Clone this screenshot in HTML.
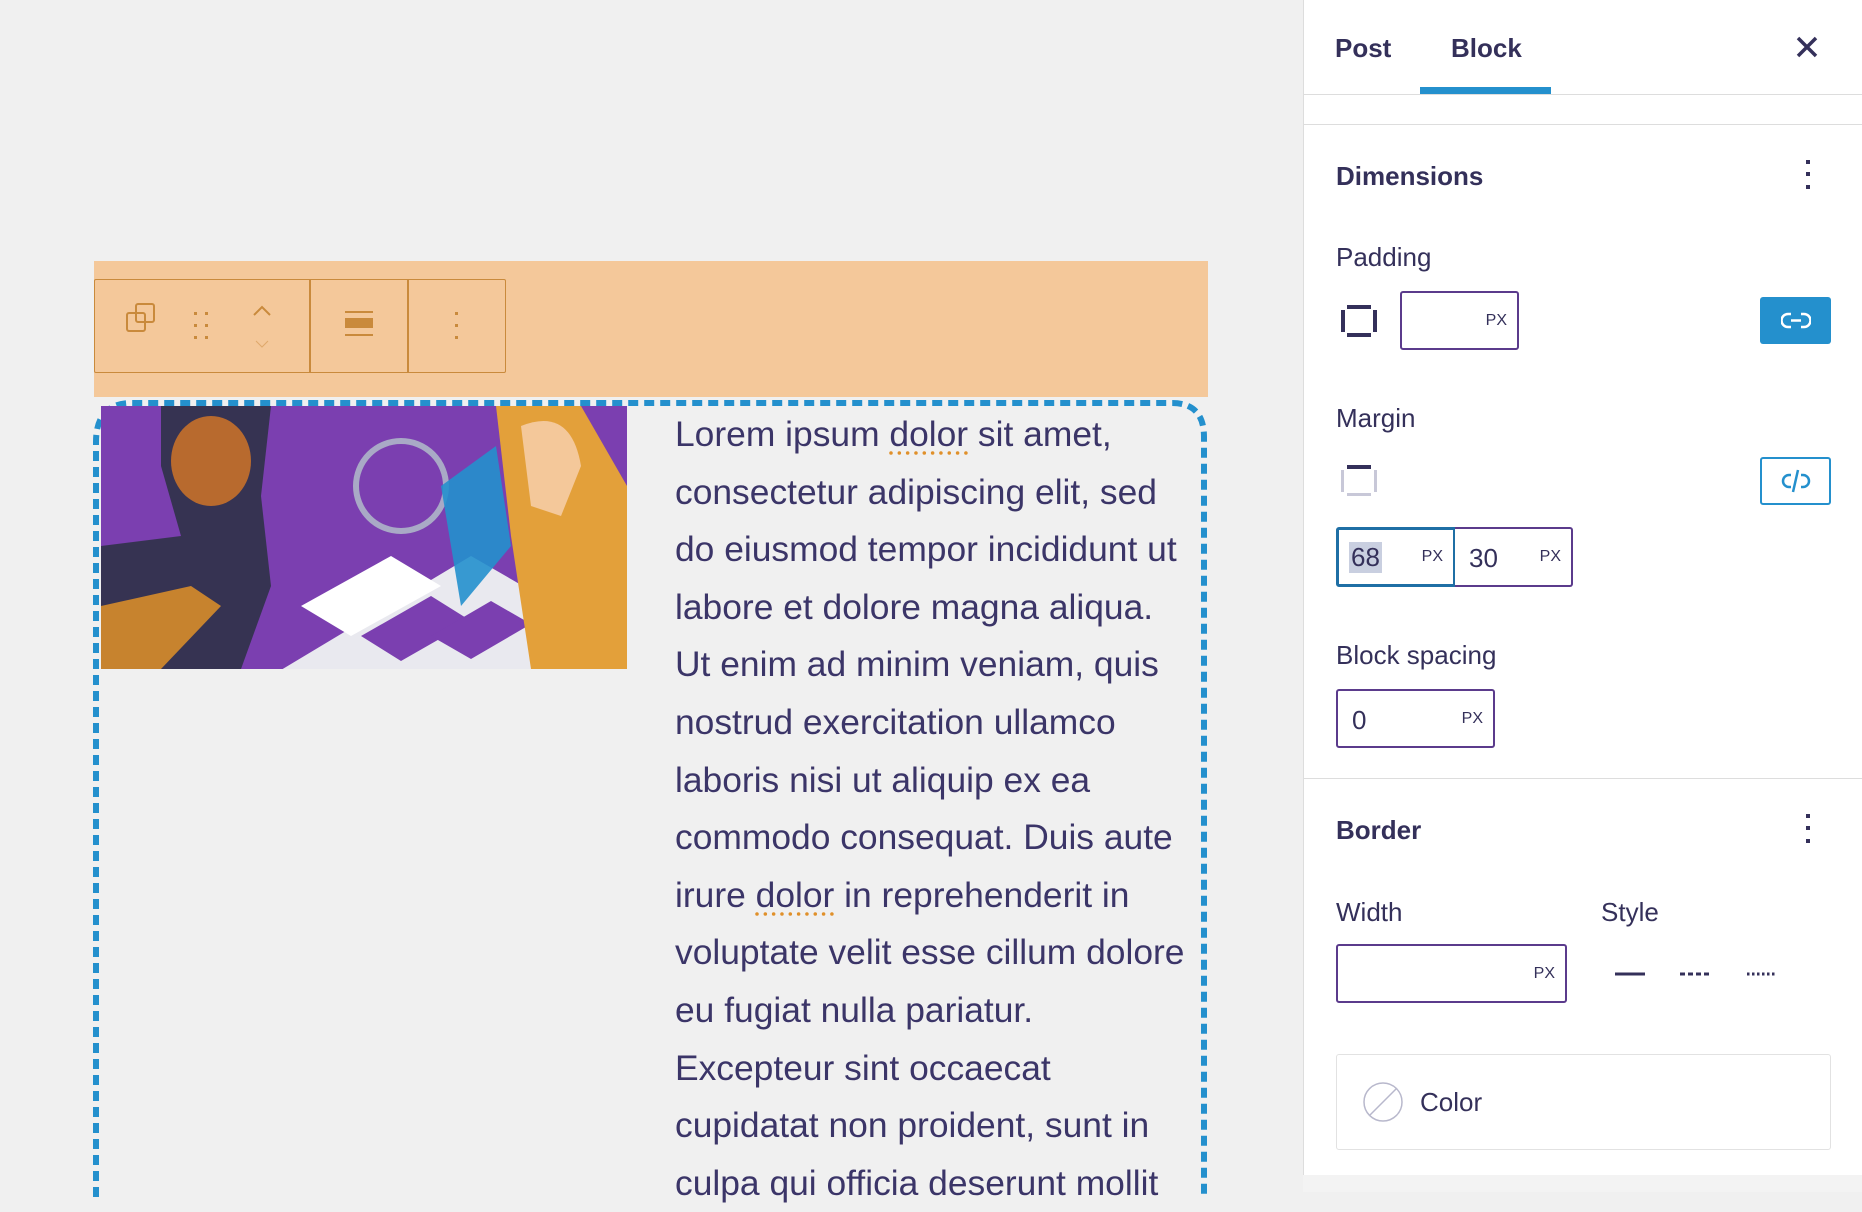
<!DOCTYPE html>
<html><head><meta charset="utf-8"><style>
*{box-sizing:border-box;margin:0;padding:0}
body{width:1862px;height:1192px;overflow:hidden;background:#f0f0f0;font-family:"Liberation Sans",sans-serif;color:#34305a;position:relative}
.a{position:absolute}
.side{left:1303px;top:0;width:559px;height:1192px;background:#fff;border-left:1px solid #ddd}
.lbl{font-size:26px;color:#34305a}
.inp{border:2px solid #5b3b8c;border-radius:3px;background:#fff}
.px{position:absolute;right:10px;top:50%;transform:translateY(-50%);font-size:16px;color:#34305a}
.txt{left:675px;top:406px;font-size:35.4px;line-height:57.6px;color:#3b3568;white-space:nowrap}
.u{text-decoration:underline dotted #e0902a;text-underline-offset:6px}
</style></head><body>
<!-- orange band -->
<div class="a" style="left:94px;top:261px;width:1114px;height:136px;background:#f4c89a"></div>
<div class="a" style="left:94px;top:279px;width:412px;height:94px;border:1.5px solid #c98a3c;border-radius:2px"></div>
<div class="a" style="left:309px;top:279px;width:1.5px;height:94px;background:#c98a3c"></div>
<div class="a" style="left:407px;top:279px;width:1.5px;height:94px;background:#c98a3c"></div>
<svg class="a" style="left:94px;top:279px" width="412" height="94" fill="none" stroke="#c98a3c" stroke-width="2">
<rect x="33" y="34" width="18" height="18" rx="2"/><rect x="42" y="25" width="18" height="18" rx="2"/>
<g fill="#c98a3c" stroke="none"><rect x="100" y="33" width="3" height="3"/><rect x="111" y="33" width="3" height="3"/><rect x="100" y="45" width="3" height="3"/><rect x="111" y="45" width="3" height="3"/><rect x="100" y="57" width="3" height="3"/><rect x="111" y="57" width="3" height="3"/>
<rect x="251" y="39" width="28" height="10"/><rect x="361" y="33" width="3" height="3"/><rect x="361" y="45" width="3" height="3"/><rect x="361" y="57" width="3" height="3"/></g>
<path d="M160 36 L168 28 L176 36"/><path d="M162 62 L168 68 L174 62" stroke-width="1" opacity=".5"/>
<line x1="251" y1="33" x2="279" y2="33"/><line x1="251" y1="56" x2="279" y2="56"/>
</svg>
<!-- dashed border -->
<svg class="a" style="left:92px;top:397px" width="1122" height="800" fill="none">
<path d="M4 800 V45 Q4 6 40 6 H1080 Q1112 6 1112 40 V800" stroke="#2490cd" stroke-width="6" stroke-dasharray="10 6"/>
</svg>
<!-- image -->
<svg class="a" style="left:101px;top:406px" width="526" height="263">
<rect width="526" height="263" fill="#7b3fb0"/>
<path d="M60 0 L170 0 L160 90 L170 180 L140 263 L0 263 L0 140 L80 130 L60 60 Z" fill="#363352"/>
<ellipse cx="110" cy="55" rx="40" ry="45" fill="#b86a2e"/>
<path d="M0 200 L90 180 L120 200 L60 263 L0 263Z" fill="#c7832e"/>
<path d="M120 300 L370 150 L526 240 L526 263 L60 263Z" fill="#e9e9ef"/>
<path d="M200 200 L290 150 L340 180 L250 230Z" fill="#fff"/>
<path d="M260 230 L330 190 L370 215 L300 255Z" fill="#7b3fb0"/>
<path d="M330 230 L390 195 L430 218 L370 253Z" fill="#7b3fb0"/>
<circle cx="300" cy="80" r="45" fill="none" stroke="#a9a9c6" stroke-width="6"/>
<path d="M395 0 L480 0 L526 80 L526 263 L430 263 L410 130 Z" fill="#e3a03a"/>
<path d="M420 20 Q470 0 480 60 L460 110 L430 100 Z" fill="#f4c89a"/>
<path d="M340 80 L395 40 L410 140 L360 200Z" fill="#2490cd" opacity=".9"/>
</svg>
<div class="a txt">Lorem ipsum <span class="u">dolor</span> sit amet,<br>consectetur adipiscing elit, sed<br>do eiusmod tempor incididunt ut<br>labore et dolore magna aliqua.<br>Ut enim ad minim veniam, quis<br>nostrud exercitation ullamco<br>laboris nisi ut aliquip ex ea<br>commodo consequat. Duis aute<br>irure <span class="u">dolor</span> in reprehenderit in<br>voluptate velit esse cillum dolore<br>eu fugiat nulla pariatur.<br>Excepteur sint occaecat<br>cupidatat non proident, sunt in<br>culpa qui officia deserunt mollit</div>
<!-- sidebar -->
<div class="a side"></div>
<div class="a" style="left:1303px;top:94px;width:559px;height:1px;background:#ddd"></div>
<div class="a" style="left:1303px;top:124px;width:559px;height:1px;background:#ddd"></div>
<div class="a" style="left:1303px;top:778px;width:559px;height:1px;background:#ddd"></div>
<div class="a" style="left:1303px;top:1175px;width:559px;height:17px;background:#f3f3f3"></div>
<div class="a" style="left:1335px;top:33px;font-size:26px;font-weight:bold">Post</div>
<div class="a" style="left:1451px;top:33px;font-size:26px;font-weight:bold">Block</div>
<div class="a" style="left:1420px;top:87px;width:131px;height:7px;background:#2490cd"></div>
<svg class="a" style="left:1795px;top:35px" width="24" height="24" stroke="#34305a" stroke-width="3.5"><path d="M3 3L21 21M21 3L3 21"/></svg>
<div class="a" style="left:1336px;top:161px;font-size:26px;font-weight:bold">Dimensions</div>
<svg class="a" style="left:1804px;top:158px" width="8" height="34" fill="#34305a"><rect x="2" y="2" width="4" height="4"/><rect x="2" y="14" width="4" height="4"/><rect x="2" y="27" width="4" height="4"/></svg>
<div class="a lbl" style="left:1336px;top:242px">Padding</div>
<svg class="a" style="left:1341px;top:302px" width="36" height="38" fill="#34305a"><rect x="6" y="3" width="24" height="4"/><rect x="6" y="31" width="24" height="4"/><rect x="0" y="8" width="4" height="22"/><rect x="32" y="8" width="4" height="22"/></svg>
<div class="a inp" style="left:1400px;top:291px;width:119px;height:59px"><span class="px">PX</span></div>
<div class="a" style="left:1760px;top:297px;width:71px;height:47px;background:#2490cd;border-radius:3px"></div>
<svg class="a" style="left:1781px;top:309px" width="30" height="24" fill="none" stroke="#fff" stroke-width="2.5"><path d="M10 5H7a6 6 0 000 13h3M20 5h3a6 6 0 010 13h-3M10 11.5h10"/></svg>
<div class="a lbl" style="left:1336px;top:403px">Margin</div>
<svg class="a" style="left:1341px;top:462px" width="36" height="38"><rect x="6" y="3" width="24" height="4" fill="#34305a"/><rect x="6" y="31" width="24" height="3" fill="#c8c8d8"/><rect x="0" y="8" width="3" height="22" fill="#c8c8d8"/><rect x="33" y="8" width="3" height="22" fill="#c8c8d8"/></svg>
<div class="a" style="left:1760px;top:457px;width:71px;height:48px;border:2px solid #2490cd;border-radius:3px;background:#fff"></div>
<svg class="a" style="left:1781px;top:468px" width="30" height="26" fill="none" stroke="#2490cd" stroke-width="2.5"><path d="M10 7H8a6 6 0 000 12h2M20 7h2a6 6 0 010 12h-2M17 2L12 24"/></svg>
<div class="a" style="left:1336px;top:527px;width:120px;height:60px;border:3px solid #1f6fa5;border-radius:3px 0 0 3px;background:#fff"><span class="a" style="left:10px;top:12px;font-size:26px;background:#c9cfe0;padding:0 2px">68</span><span class="px">PX</span></div>
<div class="a inp" style="left:1455px;top:527px;width:118px;height:60px;border-left:none;border-radius:0 3px 3px 0"><span class="a" style="left:14px;top:14px;font-size:26px">30</span><span class="px">PX</span></div>
<div class="a lbl" style="left:1336px;top:640px">Block spacing</div>
<div class="a inp" style="left:1336px;top:689px;width:159px;height:59px"><span class="a" style="left:14px;top:14px;font-size:26px">0</span><span class="px">PX</span></div>
<div class="a" style="left:1336px;top:815px;font-size:26px;font-weight:bold">Border</div>
<svg class="a" style="left:1804px;top:812px" width="8" height="34" fill="#34305a"><rect x="2" y="2" width="4" height="4"/><rect x="2" y="14" width="4" height="4"/><rect x="2" y="27" width="4" height="4"/></svg>
<div class="a lbl" style="left:1336px;top:897px">Width</div>
<div class="a lbl" style="left:1601px;top:897px">Style</div>
<div class="a inp" style="left:1336px;top:944px;width:231px;height:59px"><span class="px">PX</span></div>
<svg class="a" style="left:1612px;top:966px" width="180" height="16" stroke="#34305a" stroke-width="3"><path d="M3 8H33"/><path d="M68 8H98" stroke-dasharray="5 3"/><path d="M135 8H165" stroke-dasharray="2.5 2.5"/></svg>
<div class="a" style="left:1336px;top:1054px;width:495px;height:96px;border:1.5px solid #e2e2e2;border-radius:3px;background:#fff"></div>
<svg class="a" style="left:1362px;top:1081px" width="42" height="42" fill="none" stroke="#b8b8cc" stroke-width="1.5"><circle cx="21" cy="21" r="19"/><path d="M8 34L34 8"/></svg>
<div class="a lbl" style="left:1420px;top:1087px">Color</div>
</body></html>
